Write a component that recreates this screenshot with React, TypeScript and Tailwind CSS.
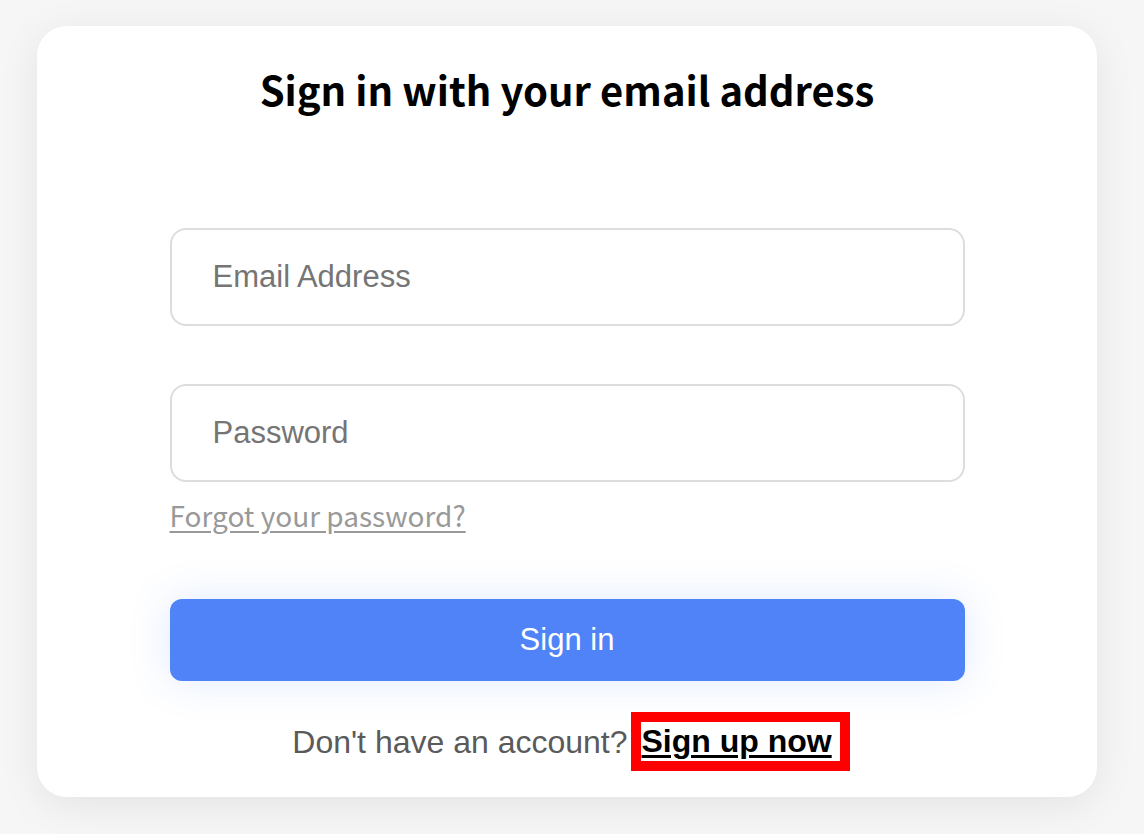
export default function App() {
  return (
    <div className="min-h-screen w-full bg-[#f6f6f6] pt-[26px] font-['Liberation_Sans',Arial,sans-serif]">
      <div className="ml-[37px] flex w-[1060px] flex-col items-center rounded-[30px] bg-white pt-[39px] pb-[26px] shadow-[0_8px_40px_rgba(0,0,0,0.08)]">
        <h1 className="text-[40px] leading-[48px] font-bold text-black font-['Noto_Sans_CJK_SC','Noto_Sans',sans-serif]">
          Sign in with your email address
        </h1>

        <form className="mt-[115px] flex w-[795px] flex-col" onSubmit={(e) => e.preventDefault()}>
          <input
            type="email"
            placeholder="Email Address"
            className="h-[98px] w-full rounded-[16px] border-2 border-[#dddddd] bg-white pl-[41px] text-[31px] text-black outline-none placeholder:text-[#757575]"
          />
          <input
            type="password"
            placeholder="Password"
            className="mt-[58px] h-[98px] w-full rounded-[16px] border-2 border-[#dddddd] bg-white pl-[41px] text-[31px] text-black outline-none placeholder:text-[#757575]"
          />
          <a
            href="#"
            className="mt-[15px] self-start text-[28px] leading-[36px] text-[#999999] underline underline-offset-[4px] font-['Noto_Sans_CJK_SC','Noto_Sans',sans-serif]"
          >
            Forgot your password?
          </a>
          <button
            type="submit"
            className="mt-[66px] h-[82px] w-full rounded-[12px] bg-[#4f83f7] text-[31px] text-white shadow-[0_0_40px_rgba(79,131,247,0.18)]"
          >
            Sign in
          </button>
        </form>

        <div className="mt-[31px] flex items-center pl-2 text-[32px]">
          <span className="text-[#5a5a5a]">Don't have an account?</span>
          <a
            href="#"
            className="ml-[3px] border-[10px] border-[#ff0000] bg-white pr-[8px] pl-px leading-[39px] font-bold text-black underline underline-offset-[3px]"
          >
            Sign up now
          </a>
        </div>
      </div>
    </div>
  );
}
